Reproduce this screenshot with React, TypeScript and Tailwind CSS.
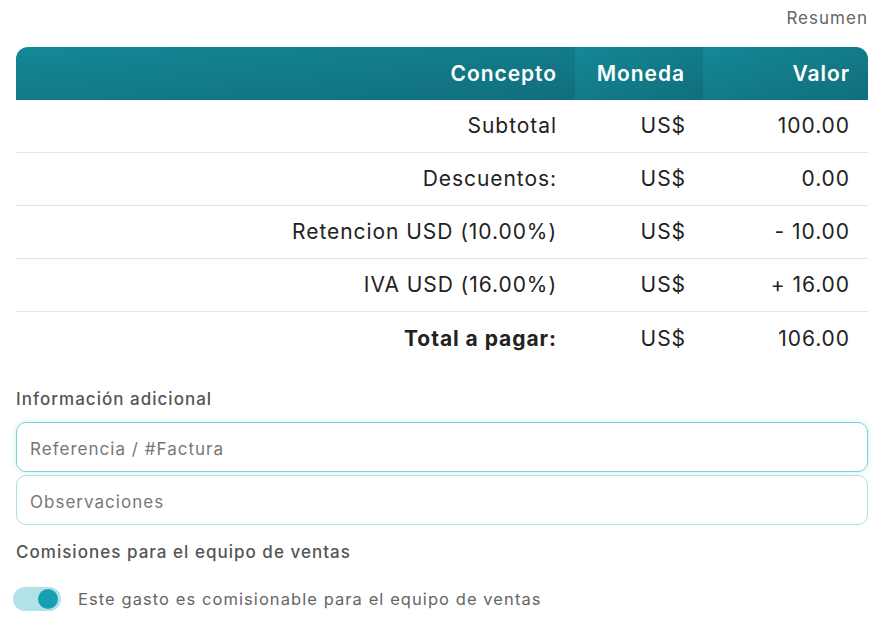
import React from 'react';

const rows = [
  { concepto: 'Subtotal', moneda: 'US$', valor: '100.00' },
  { concepto: 'Descuentos:', moneda: 'US$', valor: '0.00' },
  { concepto: 'Retencion USD (10.00%)', moneda: 'US$', valor: '- 10.00' },
  { concepto: 'IVA USD (16.00%)', moneda: 'US$', valor: '+ 16.00' },
];

const headCell = 'h-full flex items-center justify-end pr-[18px] bg-gradient-to-br from-[#148896] to-[#116e7c]';

export default function App() {
  return (
    <div className="w-[895px] min-h-[631px] bg-white font-['Inter',sans-serif] text-[#222]">
      <div className="ml-4 w-[852px] pt-[8px]">
        <div className="text-right text-[17px] tracking-[0.06em] text-[#666] leading-5">Resumen</div>

        <div className="mt-[19px] text-[21px] tracking-[0.045em]">
          <div className="grid grid-cols-[559px_128px_165px] h-[53px] rounded-t-[12px] overflow-hidden text-white font-semibold">
            <div className={headCell}>Concepto</div>
            <div className={headCell}>Moneda</div>
            <div className={headCell}>Valor</div>
          </div>
          {rows.map((r) => (
            <div key={r.concepto} className="grid grid-cols-[559px_128px_165px] h-[53px] border-b border-[#e3e3e3]">
              <div className="flex items-center justify-end pr-[18px]">{r.concepto}</div>
              <div className="flex items-center justify-end pr-[17px]">{r.moneda}</div>
              <div className="flex items-center justify-end pr-[18px]">{r.valor}</div>
            </div>
          ))}
          <div className="grid grid-cols-[559px_128px_165px] h-[53px]">
            <div className="flex items-center justify-end pr-[18px] font-bold">Total a pagar:</div>
            <div className="flex items-center justify-end pr-[17px]">US$</div>
            <div className="flex items-center justify-end pr-[18px]">106.00</div>
          </div>
        </div>

        <div className="mt-[24px] text-[17px] tracking-[0.06em] font-medium text-[#555] leading-5">Información adicional</div>

        <div className="mt-[13px] flex flex-col gap-[3px]">
          <input
            placeholder="Referencia / #Factura"
            className="h-[50px] w-full rounded-[10px] border border-[#7ccfdc] px-[13px] pt-[3px] text-[17px] tracking-[0.06em] shadow-[0_0_6px_rgba(124,207,220,0.35)] outline-none placeholder:text-[#777]"
          />
          <input
            placeholder="Observaciones"
            className="h-[50px] w-full rounded-[10px] border border-[#abdfe7] px-[13px] pt-[3px] text-[17px] tracking-[0.06em] outline-none placeholder:text-[#777]"
          />
        </div>

        <div className="mt-[17px] text-[17px] tracking-[0.06em] font-medium text-[#555] leading-5">Comisiones para el equipo de ventas</div>

        <div className="mt-[25px] flex items-center gap-[17px]">
          <div className="-ml-[3px] relative h-[24px] w-[48px] rounded-full bg-[#b3e1e8]">
            <div className="absolute right-[3px] top-[2px] h-[20px] w-[20px] rounded-full bg-[#17a0b1]" />
          </div>
          <span className="text-[16.5px] tracking-[0.065em] text-[#666]">Este gasto es comisionable para el equipo de ventas</span>
        </div>
      </div>
    </div>
  );
}
